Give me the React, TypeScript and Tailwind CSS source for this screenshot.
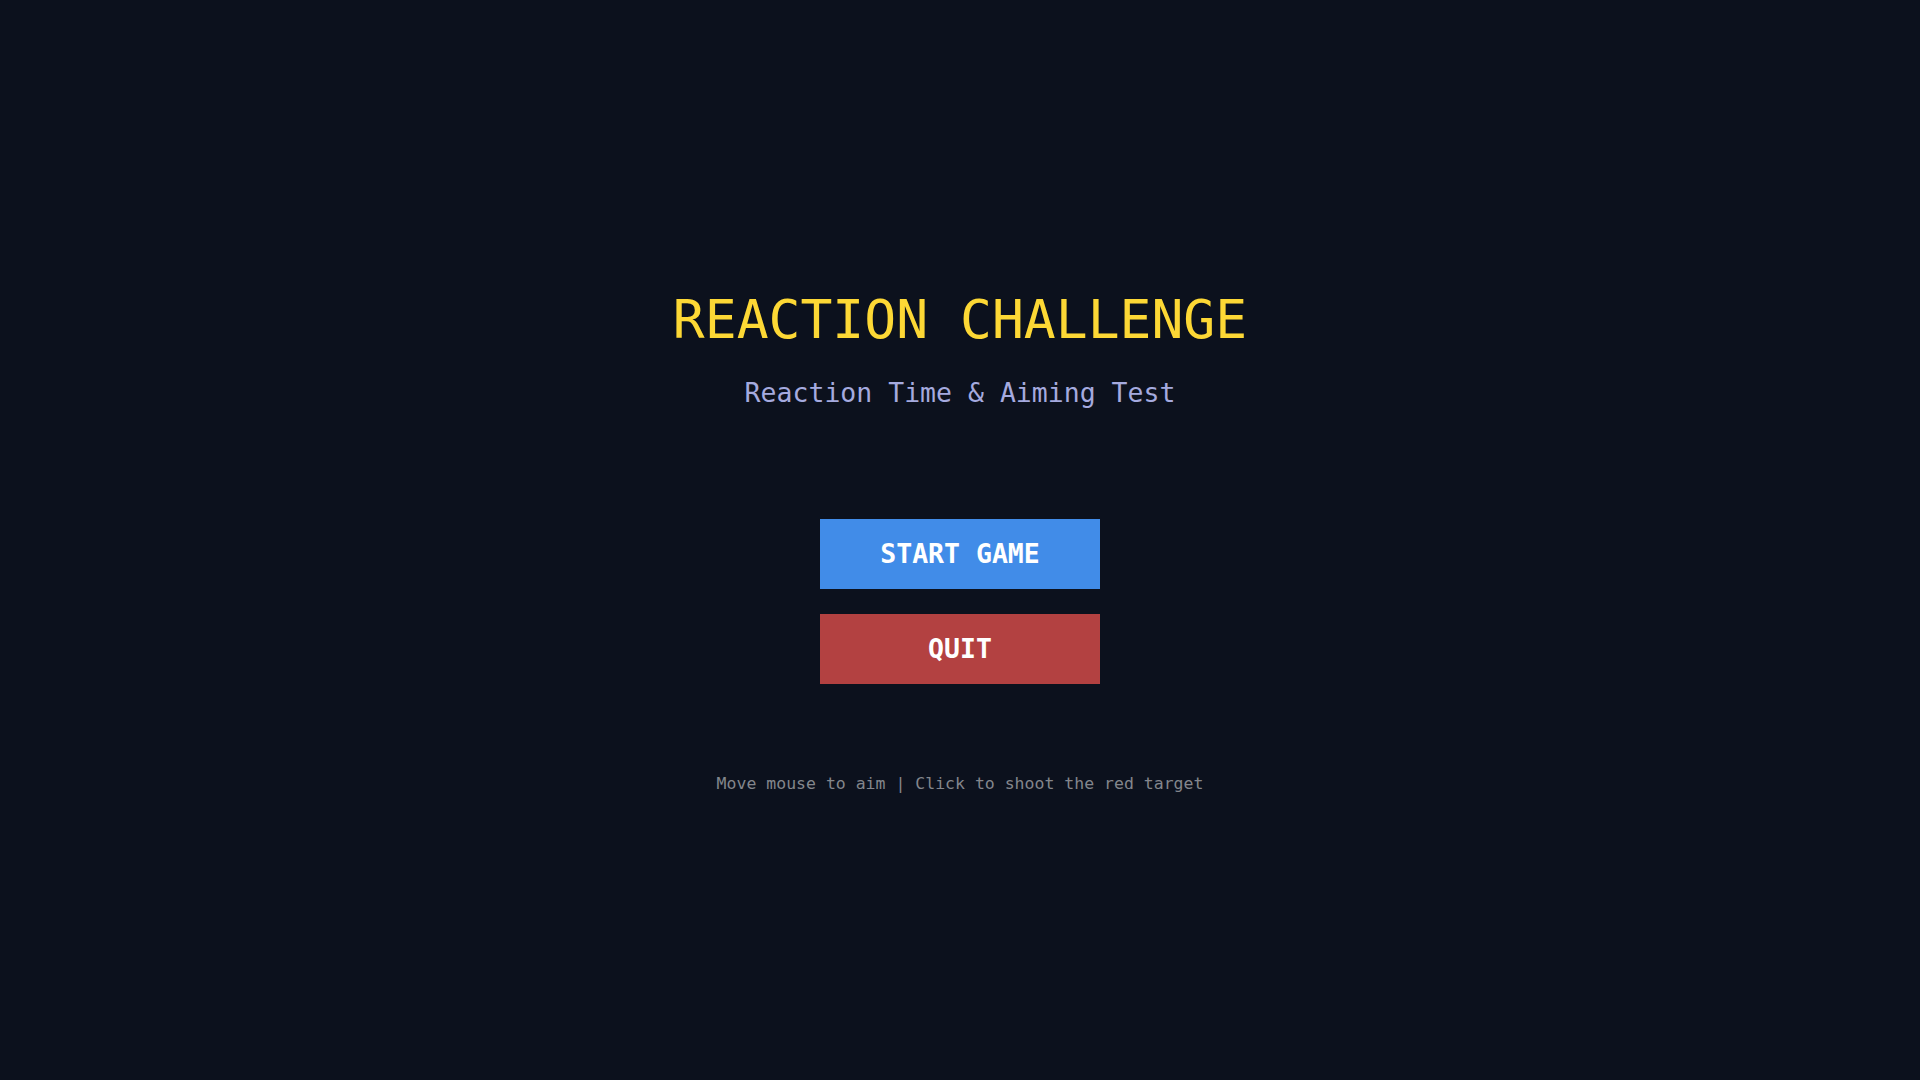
import React from 'react';

const App: React.FC = () => {
  return (
    <div className="h-screen w-full bg-[#0c111d] pt-[3px] flex flex-col items-center justify-center font-['DejaVu_Sans_Mono',monospace]">
      {/* Title */}
      <h1 className="text-[53px] leading-[60px] h-[60px] text-[#fdd835] whitespace-nowrap">
        REACTION CHALLENGE
      </h1>
      <p className="mt-[27px] text-[26.5px] leading-[32px] h-[32px] text-[#a5aadf] whitespace-nowrap">
        Reaction Time &amp; Aiming Test
      </p>

      {/* Menu */}
      <div className="mt-[110px] flex flex-col gap-[25px]">
        <button className="w-[280px] h-[70px] flex items-center justify-center bg-[#418ce8] text-white text-[26.5px] font-bold">
          START GAME
        </button>
        <button className="w-[280px] h-[70px] flex items-center justify-center bg-[#b34141] text-white text-[26.5px] font-bold">
          QUIT
        </button>
      </div>

      <p className="mt-[90px] text-[16.5px] leading-[20px] h-[20px] text-[#83868c] whitespace-nowrap">
        Move mouse to aim | Click to shoot the red target
      </p>
    </div>
  );
};

export default App;
